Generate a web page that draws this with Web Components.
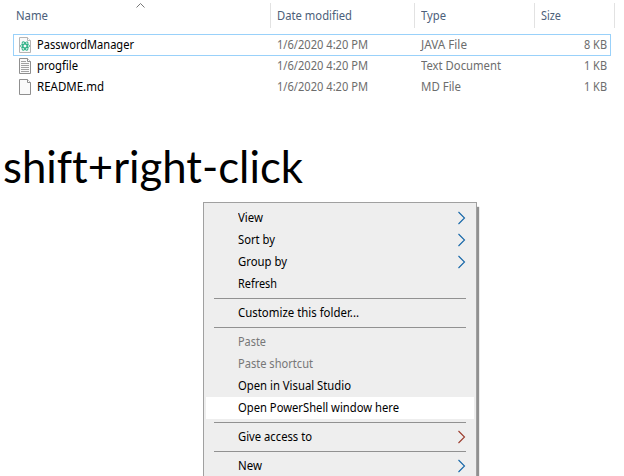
<!DOCTYPE html>
<html lang="en"><head><meta charset="utf-8"><title>Files</title>
<style>html,body{margin:0;background:#fff;overflow:hidden}body{width:624px;height:476px;font:12px/20px "Noto Sans","Open Sans",sans-serif}</style></head>
<body><explorer-page></explorer-page>
<script>
const define=(name,html,setup)=>customElements.define(name,class extends HTMLElement{
  connectedCallback(){if(this.shadowRoot)return;const t=document.createElement('template');t.innerHTML=html;
    this.attachShadow({mode:'open'}).append(t.content.cloneNode(true));if(setup)setup(this,this.shadowRoot);}
});
// Text label condensed or widened to a given width.
define('fit-text',`<style>:host{display:block;white-space:nowrap;text-align:left}span{display:inline-block;transform-origin:0 50%}</style><span><slot></slot></span>`,(h,r)=>{
  const s=r.querySelector('span'),w=+h.getAttribute('w');h.style.width=w+'px';
  s.style.transform=`scaleX(${w/s.getBoundingClientRect().width})`;
});
define('file-icon',`<style>:host{display:block;width:14px;height:16px}svg{display:block}</style><svg width="14" height="16" viewBox="0 0 14 16"><path d="M1.5.5h8l3 3v12h-11z" fill="#fafafa" stroke="#8f8f8f"/><path d="M9.5.5v3h3" fill="#fff" stroke="#8f8f8f"/><g id="g"></g></svg>`,(h,r)=>{
  const k=h.getAttribute('kind');
  r.querySelector('#g').innerHTML=k==='text'?'<path d="M3 3.5h5M3 5.5h8M3 7.5h8M3 9.5h8M3 11.5h8M3 13.5h8" stroke="#a2a2a2"/>':
  k==='java'?'<g fill="none" stroke="#2bb185" stroke-width=".95"><ellipse cx="7" cy="9" rx="4.6" ry="1.9"/><ellipse cx="7" cy="9" rx="4.6" ry="1.9" transform="rotate(60 7 9)"/><ellipse cx="7" cy="9" rx="4.6" ry="1.9" transform="rotate(120 7 9)"/></g>':'';
  if(k==='java')r.querySelectorAll('svg>path').forEach(p=>p.setAttribute('stroke','#b5b5b5'));
});
define('file-header',`<style>:host{display:grid;grid-template-columns:271px 144px 120px 80px;height:25px;padding-top:3px;color:#4c607a;line-height:25px;position:relative}
div{border-right:1px solid #e2e2e2;box-sizing:border-box;padding-left:6px}div:first-of-type{padding-left:16px}svg{position:absolute;left:136px;top:3px}</style>
<div><fit-text w="32">Name</fit-text></div><div><fit-text w="75">Date modified</fit-text></div><div><fit-text w="25">Type</fit-text></div><div><fit-text w="20">Size</fit-text></div>
<svg width="9" height="5"><path d="M.5 4.5l4-4 4 4" fill="none" stroke="#777"/></svg>`);
customElements.define('file-item',class extends HTMLElement{connectedCallback(){
  const a=n=>this.getAttribute(n);this.attachShadow({mode:'open'}).innerHTML=`<style>
:host{display:grid;grid-template-columns:24px 240px 144px 163px 23px;width:598px;height:21px;box-sizing:border-box;margin-left:13px;color:#6d6d6d;line-height:21px}
:host([selected]){box-shadow:0 0 0 1px #99d1fa inset;height:22px;margin-bottom:-1px}file-icon{margin:3px 0 0 5px}.n{color:#000}</style>
<file-icon kind="${a('kind')}"></file-icon><fit-text class="n" w="${a('nw')}">${a('name')}</fit-text><fit-text w="91">1/6/2020 4:20 PM</fit-text><fit-text w="${a('tw')}">${a('type')}</fit-text><fit-text w="23">${a('size')}</fit-text>`;
}});
define('menu-item',`<style>:host{display:flex;height:22px;line-height:22px;margin:0 2px;padding:0 8px 0 32px;align-items:center;justify-content:space-between;color:#000}
:host([disabled]){color:#777}:host([active]){background:#fff}svg{display:none}:host([sub]) svg{display:block}</style><slot></slot>
<svg width="9" height="14" viewBox="0 0 9 14"><path d="M1.5 1l6 6-6 6" fill="none" stroke="var(--arrow,#1566a8)" stroke-width="1.1"/></svg>`);
define('menu-line',`<style>:host{display:block;height:1px;margin:3px 10px;background:#919191}</style>`);
define('context-menu',`<style>:host{display:block;box-sizing:border-box;width:274px;height:300px;background:#eee;border:1px solid #a0a0a0;padding-top:4px;box-shadow:2px 5px 1px 0 #909090}</style><slot></slot>`);
define('explorer-page',`<style>:host{display:block;width:624px;height:476px;overflow:hidden;position:relative}
.list{padding-top:6px}h1{margin:37px 0 0 3px;height:64px;font:44px/64px Lato,sans-serif;font-variant-ligatures:none;color:#000}context-menu{position:absolute;left:203px;top:202px}</style>
<file-header></file-header><div class="list">
<file-item selected kind="java" name="PasswordManager" nw="97" type="JAVA File" tw="46" size="8 KB"></file-item>
<file-item kind="text" name="progfile" nw="41" type="Text Document" tw="80" size="1 KB"></file-item>
<file-item kind="blank" name="README.md" nw="67" type="MD File" tw="40" size="1 KB"></file-item></div>
<h1><fit-text w="300">shift+right-click</fit-text></h1>
<context-menu>
<menu-item sub><fit-text w="25">View</fit-text></menu-item><menu-item sub><fit-text w="37">Sort by</fit-text></menu-item><menu-item sub><fit-text w="49">Group by</fit-text></menu-item><menu-item><fit-text w="39">Refresh</fit-text></menu-item><menu-line></menu-line>
<menu-item><fit-text w="121">Customize this folder...</fit-text></menu-item><menu-line></menu-line>
<menu-item disabled><fit-text w="28">Paste</fit-text></menu-item><menu-item disabled><fit-text w="75">Paste shortcut</fit-text></menu-item><menu-item><fit-text w="113">Open in Visual Studio</fit-text></menu-item><menu-item active><fit-text w="161">Open PowerShell window here</fit-text></menu-item><menu-line></menu-line>
<menu-item sub style="--arrow:#9c3b2c"><fit-text w="74">Give access to</fit-text></menu-item><menu-line></menu-line><menu-item sub><fit-text w="24">New</fit-text></menu-item>
</context-menu>`);
</script></body></html>
